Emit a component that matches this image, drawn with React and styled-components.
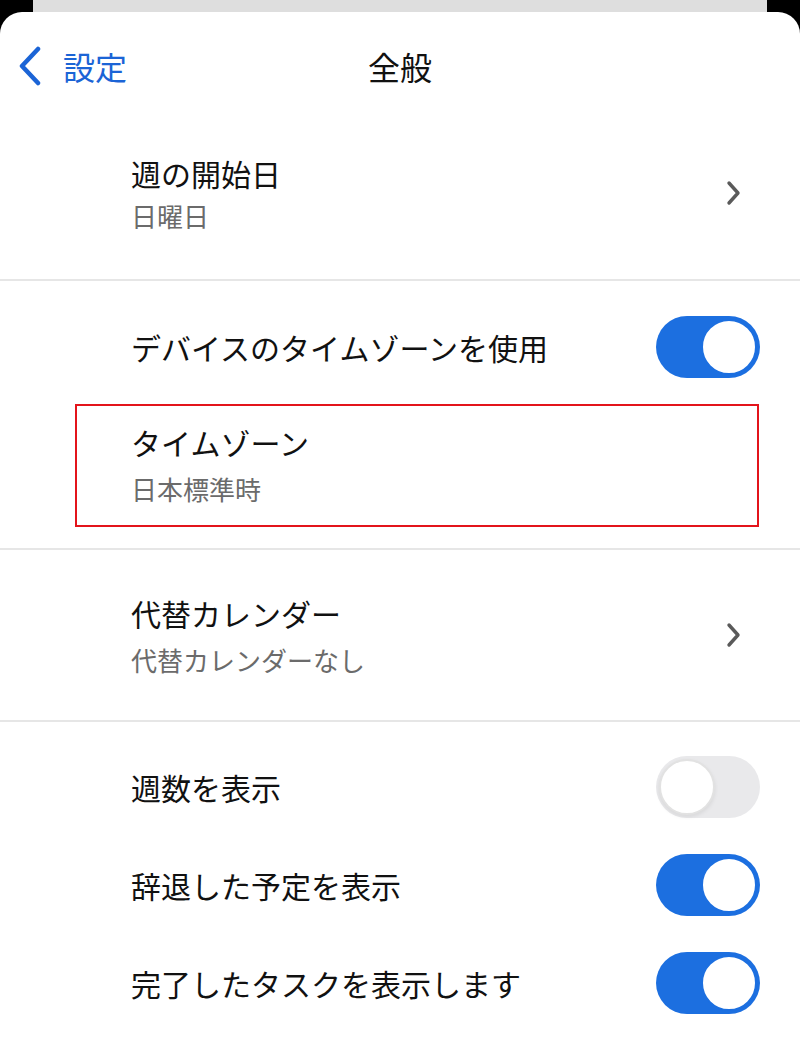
import React, { useState } from 'react';
import styled, { createGlobalStyle } from 'styled-components';

const GlobalStyle = createGlobalStyle`
  html, body {
    margin: 0;
    padding: 0;
    background: #000;
  }
  body {
    font-family: "Noto Sans CJK JP", "Noto Sans", sans-serif;
    -webkit-font-smoothing: antialiased;
  }
`;

const Page = styled.div`
  min-height: 1061px;
  display: flex;
  flex-direction: column;
`;

// the sheet stacked behind the current one
const BackSheet = styled.div`
  height: 12px;
  margin: 0 33px;
  background: #dedede;
`;

const Sheet = styled.div`
  flex: 1;
  background: #fff;
  border-radius: 22px 22px 0 0;
  display: flex;
  flex-direction: column;
`;

const Header = styled.header`
  height: 80px;
  margin-top: 14px;
  display: grid;
  grid-template-columns: 1fr auto 1fr;
  align-items: center;
`;

const BackButton = styled.button`
  justify-self: start;
  display: flex;
  align-items: center;
  gap: 19px;
  padding: 0 0 0 16px;
  border: none;
  background: none;
  color: #1b64d6;
  font-family: inherit;
  font-size: 32px;
  cursor: pointer;
`;

const Title = styled.h1`
  margin: 0;
  font-size: 32px;
  font-weight: 400;
  color: #111;
`;

const Section = styled.section`
  display: flex;
  flex-direction: column;
  padding: ${(p) => p.$pad || '0'};
  border-bottom: ${(p) => (p.$last ? 'none' : '2px solid #e6e6e6')};
`;

const Row = styled.div`
  height: ${(p) => p.$h}px;
  display: flex;
  align-items: center;
  justify-content: space-between;
  padding: 0 40px 0 131px;
  box-sizing: border-box;
`;

const HighlightRow = styled.div`
  height: 123px;
  margin: 15px 41px 0 75px;
  padding: 0 0 4px 54px;
  border: 2px solid #e3141b;
  display: flex;
  align-items: center;
  box-sizing: border-box;
`;

const TextBlock = styled.div`
  display: flex;
  flex-direction: column;
  gap: ${(p) => p.$gap || 10}px;
`;

const Label = styled.div`
  font-size: 30px;
  line-height: 38px;
  color: #111;
`;

const Sub = styled.div`
  font-size: 26px;
  line-height: 32px;
  color: #6b6b6b;
`;

const Track = styled.button`
  width: 104px;
  height: 62px;
  flex: none;
  border-radius: 31px;
  border: none;
  padding: 3px;
  box-sizing: border-box;
  background: ${(p) => (p.$on ? '#1c6fe0' : '#e9e9eb')};
  display: flex;
  justify-content: ${(p) => (p.$on ? 'flex-end' : 'flex-start')};
  cursor: pointer;
`;

const Knob = styled.span`
  width: 56px;
  height: 56px;
  border-radius: 50%;
  background: #fff;
  box-sizing: border-box;
  border: ${(p) => (p.$on ? '2px solid #1c6fe0' : '2px solid #e2e2e2')};
  box-shadow: ${(p) => (p.$on ? 'none' : '0 2px 4px rgba(0,0,0,0.08)')};
`;

const Toggle = ({ initial }) => {
  const [on, setOn] = useState(initial);
  return (
    <Track $on={on} onClick={() => setOn(!on)}>
      <Knob $on={on} />
    </Track>
  );
};

const BackChevron = () => (
  <svg width="28" height="40" viewBox="0 0 28 40">
    <path d="M22 3 L6 20 L22 37" fill="none" stroke="currentColor" strokeWidth="4.5" strokeLinecap="round" strokeLinejoin="round" />
  </svg>
);

const Chevron = () => (
  <svg width="18" height="26" viewBox="0 0 18 26" style={{ marginRight: 17 }}>
    <path d="M4 3 L13 13 L4 23" fill="none" stroke="#5a5a5a" strokeWidth="3.4" strokeLinecap="round" strokeLinejoin="round" />
  </svg>
);

const App = () => (
  <Page>
    <GlobalStyle />
    <BackSheet />
    <Sheet>
      <Header>
        <BackButton>
          <BackChevron />
          設定
        </BackButton>
        <Title>全般</Title>
        <span />
      </Header>

      <Section>
        <Row $h={173}>
          <TextBlock $gap={8}>
            <Label>週の開始日</Label>
            <Sub>日曜日</Sub>
          </TextBlock>
          <Chevron />
        </Row>
      </Section>

      <Section $pad="24px 0 21px">
        <Row $h={84}>
          <Label>デバイスのタイムゾーンを使用</Label>
          <Toggle initial />
        </Row>
        <HighlightRow>
          <TextBlock $gap={12}>
            <Label>タイムゾーン</Label>
            <Sub>日本標準時</Sub>
          </TextBlock>
        </HighlightRow>
      </Section>

      <Section>
        <Row $h={170}>
          <TextBlock $gap={12}>
            <Label>代替カレンダー</Label>
            <Sub>代替カレンダーなし</Sub>
          </TextBlock>
          <Chevron />
        </Row>
      </Section>

      <Section $pad="16px 0 0" $last>
        <Row $h={98}>
          <Label>週数を表示</Label>
          <Toggle initial={false} />
        </Row>
        <Row $h={98}>
          <Label>辞退した予定を表示</Label>
          <Toggle initial />
        </Row>
        <Row $h={98}>
          <Label>完了したタスクを表示します</Label>
          <Toggle initial />
        </Row>
      </Section>
    </Sheet>
  </Page>
);

export default App;
